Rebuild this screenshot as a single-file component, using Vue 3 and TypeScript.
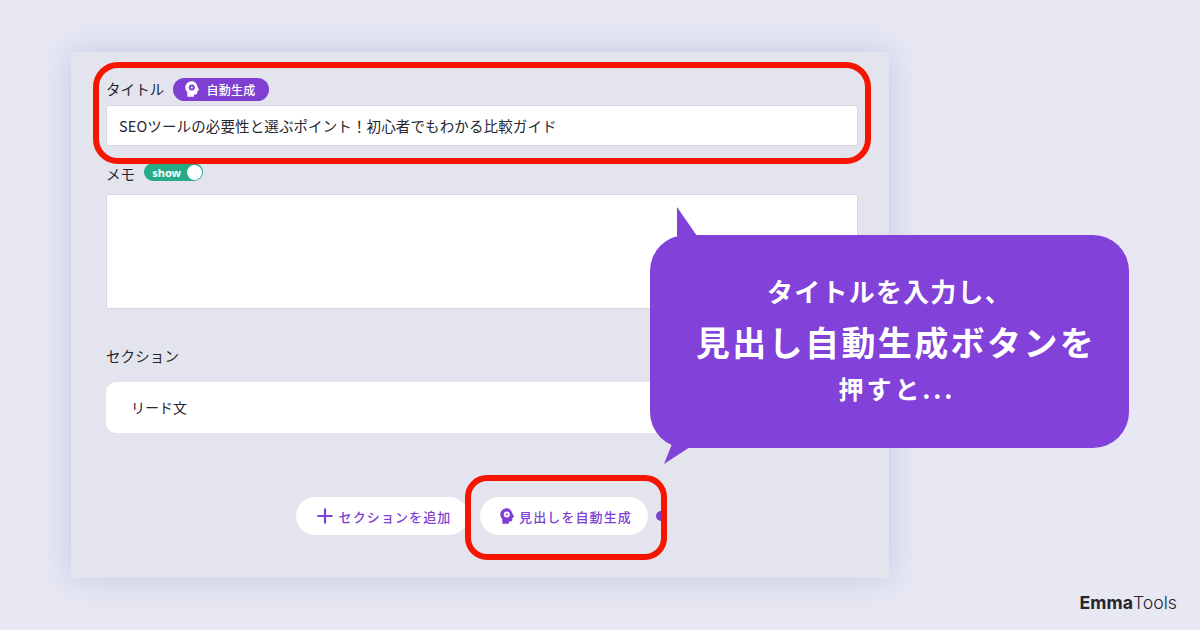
<script setup lang="ts">
const headIcon =
  'M8 0.3C4.300 0.3 1.300 3 1.300 6.600c0 1.800.7 3.300 2 4.500v4.600h6.600v-2.300h1.700c1.100 0 1.800-.8 1.800-1.800V9.700l1.300-.5c.3-.1.4-.4.3-.7l-1.600-2.900C12.900 2.700 10.700.3 8 .3Z'
</script>

<template>
  <div class="page">
    <section class="panel">
      <div class="label-row title-row">
        <span class="label">タイトル</span>
        <span class="pill">
          <svg class="head" viewBox="0 0 16 16">
            <path :d="headIcon" fill="#fff" />
            <circle cx="7.8" cy="6.500" r="3" fill="#7f3fd2" />
            <circle cx="7.8" cy="6.500" r="1.100" fill="#fff" />
          </svg>
          自動生成
        </span>
      </div>
      <div class="field title-field">SEOツールの必要性と選ぶポイント！初心者でもわかる比較ガイド</div>

      <div class="label-row memo-row">
        <span class="label">メモ</span>
        <span class="toggle">
          <span class="toggle-text">show</span>
          <span class="knob"></span>
        </span>
      </div>
      <div class="field memo-field"></div>

      <div class="label section-label">セクション</div>
      <div class="section-item">リード文</div>

      <div class="actions">
        <button class="action add">
          <svg class="plus" viewBox="0 0 16 16">
            <path d="M8 0.500v15M0.500 8h15" stroke="#7f3fd2" stroke-width="2.200" fill="none" />
          </svg>
          セクションを追加
        </button>
        <button class="action generate">
          <svg class="head" viewBox="0 0 16 16">
            <path :d="headIcon" fill="#7f3fd2" />
            <circle cx="7.8" cy="6.500" r="3" fill="#fff" />
            <circle cx="7.8" cy="6.500" r="1.100" fill="#7f3fd2" />
          </svg>
          見出しを自動生成
        </button>
        <span class="dot"></span>
      </div>

      <div class="highlight highlight-title"></div>
      <div class="highlight highlight-button"></div>
    </section>

    <aside class="bubble">
      <svg class="tail tail-top" viewBox="0 0 20 29">
        <path d="M0 0L20 29H0Z" fill="#8241d9" />
      </svg>
      <svg class="tail tail-bottom" viewBox="0 0 26 20">
        <path d="M0 20L8 0L26 3Z" fill="#8241d9" />
      </svg>
      <p class="line line-one">タイトルを入力し、</p>
      <p class="line line-two">見出し自動生成ボタンを</p>
      <p class="line line-three">押すと...</p>
    </aside>

    <div class="brand"><b>Emma</b>Tools</div>
  </div>
</template>

<style>
html,
body {
  margin: 0;
  background: #e7e8f3;
}
</style>

<style scoped>
.page {
  position: relative;
  width: 1200px;
  height: 630px;
  overflow: hidden;
  padding: 52px 0 0 71px;
  box-sizing: border-box;
  background: #e7e8f3;
  font-family: "Noto Sans CJK JP", "Noto Sans", sans-serif;
  color: #26262e;
}

.panel {
  position: relative;
  width: 818px;
  height: 526px;
  padding: 25px 31px 0 35px;
  box-sizing: border-box;
  background: #e3e4ee;
  box-shadow: 0 0 30px rgba(120, 120, 190, 0.3);
}

.label-row {
  display: flex;
  align-items: center;
}

.title-row {
  height: 24px;
  gap: 9px;
}

.memo-row {
  height: 24px;
  margin-top: 16px;
  gap: 9px;
}

.label {
  font-size: 14.5px;
  line-height: 24px;
  letter-spacing: 0.1px;
  white-space: nowrap;
}

.pill {
  display: flex;
  align-items: center;
  gap: 6px;
  height: 23px;
  width: 96px;
  padding-left: 11px;
  box-sizing: border-box;
  border-radius: 12px;
  background: #7f3fd2;
  color: #fff;
  font-size: 12px;
  font-weight: 500;
  letter-spacing: 0.3px;
}

.head {
  width: 16px;
  height: 16px;
  flex: none;
}

.toggle {
  display: flex;
  align-items: center;
  justify-content: space-between;
  width: 59px;
  height: 18px;
  margin: -4px 0 0 0;
  padding: 0 1px 0 8px;
  box-sizing: border-box;
  border-radius: 9px;
  background: #25ab86;
  color: #fff;
  font-family: "Noto Sans", sans-serif;
  font-size: 11px;
  font-weight: 700;
}

.knob {
  width: 15px;
  height: 15px;
  border-radius: 50%;
  background: #fff;
}

.field {
  width: 752px;
  box-sizing: border-box;
  background: #fff;
  border: 1px solid #d6d7e2;
  border-radius: 3px;
}

.title-field {
  height: 41px;
  margin-top: 4px;
  padding-left: 12px;
  font-size: 14.5px;
  line-height: 39px;
  letter-spacing: 0.12px;
}

.memo-field {
  height: 115px;
  margin-top: 8px;
}

.section-label {
  margin-top: 35px;
}

.section-item {
  width: 752px;
  height: 51px;
  margin-top: 14px;
  padding-left: 25px;
  box-sizing: border-box;
  background: #fff;
  border-radius: 10px;
  font-size: 14px;
  line-height: 51px;
}

.actions {
  display: flex;
  align-items: center;
  margin: 64px 0 0 190px;
}

.action {
  display: flex;
  align-items: center;
  justify-content: center;
  height: 38px;
  border: 0;
  border-radius: 19px;
  background: #fff;
  color: #7f3fd2;
  font-family: inherit;
  font-size: 13px;
  font-weight: 500;
  letter-spacing: 1.1px;
}

.add {
  width: 172px;
  padding: 0 0 0 4px;
  gap: 6px;
}

.add .plus {
  width: 16px;
  height: 16px;
}

.generate {
  width: 168px;
  margin-left: 12px;
  padding: 0 0 0 3px;
  gap: 4px;
}

.dot {
  width: 10px;
  height: 10px;
  margin-left: 8px;
  border-radius: 50%;
  background: #7f3fd2;
}

.highlight {
  position: absolute;
  box-sizing: border-box;
  border: 6px solid #f61500;
}

.highlight-title {
  left: 22px;
  top: 10px;
  width: 778px;
  height: 102px;
  border-radius: 25px;
}

.highlight-button {
  left: 394px;
  top: 423px;
  width: 202px;
  height: 85px;
  border-radius: 22px;
}

.bubble {
  position: absolute;
  left: 650px;
  top: 235px;
  width: 479px;
  height: 213px;
  padding-top: 38px;
  box-sizing: border-box;
  border-radius: 36px;
  background: #8241d9;
  color: #fff;
  text-align: center;
  font-weight: 700;
}

.tail {
  position: absolute;
}

.tail-top {
  left: 27px;
  top: -28px;
  width: 20px;
  height: 29px;
}

.tail-bottom {
  left: 14px;
  top: 209px;
  width: 26px;
  height: 20px;
}

.line {
  margin: 0;
}

.line-one {
  font-size: 26px;
  line-height: 36px;
  letter-spacing: 1.2px;
}

.line-two {
  margin-top: 10px;
  padding-left: 13px;
  font-size: 34px;
  line-height: 46px;
  letter-spacing: 2.4px;
}

.line-three {
  margin-top: 6px;
  padding-left: 15px;
  font-size: 25px;
  line-height: 34px;
  letter-spacing: 2.9px;
}

.brand {
  position: absolute;
  right: 23px;
  top: 593px;
  font-family: "Inter", sans-serif;
  font-size: 17.7px;
  font-weight: 300;
  line-height: 20px;
  color: #26262b;
}

.brand b {
  font-weight: 700;
}
</style>
